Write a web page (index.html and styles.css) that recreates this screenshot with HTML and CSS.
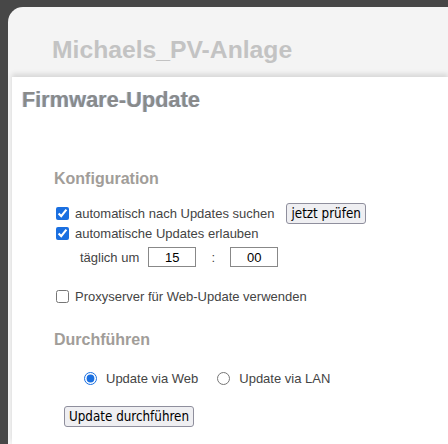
FILE: index.html
```html
<!DOCTYPE html>
<html>
<head>
<meta charset="utf-8">
<link rel="stylesheet" href="styles.css">
</head>
<body>
<div class="frame">
  <div class="header">Michaels_PV-Anlage</div>
  <div class="content">
    <h1 class="page-title">Firmware-Update</h1>
    <h2 class="section-title">Konfiguration</h2>
    <div class="row">
      <label class="check"><input type="checkbox" checked> automatisch nach Updates suchen</label>
      <button class="btn btn-check">jetzt prüfen</button>
    </div>
    <div class="row">
      <label class="check"><input type="checkbox" checked> automatische Updates erlauben</label>
    </div>
    <div class="row time-row">
      <span class="time-label">täglich um</span>
      <input class="time-input" type="text" value="15">
      <span class="colon">:</span>
      <input class="time-input" type="text" value="00">
    </div>
    <div class="row proxy-row">
      <label class="check"><input type="checkbox"> Proxyserver für Web-Update verwenden</label>
    </div>
    <h2 class="section-title exec-title">Durchführen</h2>
    <div class="radio-row">
      <label class="radio"><input type="radio" name="src" checked> Update via Web</label>
      <label class="radio"><input type="radio" name="src"> Update via LAN</label>
    </div>
    <div class="submit-row">
      <button class="btn">Update durchführen</button>
    </div>
  </div>
</div>
</body>
</html>
```

FILE: styles.css
```css
html, body {
  margin: 0;
  padding: 0;
  background: #474747;
  height: 100%;
  overflow: hidden;
}
body {
  padding: 7px 0 0 8px;
  box-sizing: border-box;
  font-family: "Liberation Sans", Arial, sans-serif;
}
.frame {
  background: #f4f4f4;
  border-top-left-radius: 15px;
  height: 100%;
  display: flex;
  flex-direction: column;
}
.header {
  font-size: 24.7px;
  font-weight: bold;
  color: #c3c3c3;
  padding: 30px 0 0 44px;
  height: 40px;
  line-height: 26px;
}
.content {
  background: #fff;
  margin-left: 4px;
  flex: 1;
  box-shadow: 0 -3px 5px rgba(0,0,0,0.12);
  padding: 12px 0 0 10px;
}
.page-title {
  margin: 0;
  font-size: 21.8px;
  font-weight: bold;
  color: #8a8a8a;
  text-shadow: -1px 0 0 rgba(120,170,230,0.5);
  line-height: 22px;
}
.section-title {
  margin: 58px 0 0 32px;
  font-size: 16px;
  font-weight: bold;
  color: #a19d99;
  line-height: 20px;
}
.exec-title {
  margin-top: 26px;
}
.row {
  display: flex;
  align-items: center;
  margin-left: 34px;
  font-size: 13px;
  color: #444;
}
.section-title + .row {
  margin-top: 14px;
}
.check {
  display: flex;
  align-items: center;
}
.check input {
  width: 13px;
  height: 13px;
  margin: 0 6px 0 0;
  accent-color: #1a6fe0;
}
.btn {
  font-family: "DejaVu Sans Condensed", "DejaVu Sans", sans-serif;
  font-size: 13.3px;
  color: #000;
  background: #efeff2;
  border: 1px solid #8f8f9d;
  border-radius: 3px;
  padding: 0 4px;
  height: 21px;
}
.btn-check {
  margin-left: 12px;
}
.row + .row { margin-top: 2px; }
.time-row {
  margin-left: 58px;
  margin-top: 6px !important;
}
.time-label { margin-right: 9px; }
.time-input {
  width: 40px;
  height: 14px;
  border: 1px solid #888;
  border-radius: 0;
  text-align: center;
  font-family: "Liberation Sans", Arial, sans-serif;
  font-size: 13px;
  padding: 2px 3px;
  color: #000;
}
.colon {
  width: 34px;
  text-align: center;
  color: #444;
}
.proxy-row {
  margin-top: 22px !important;
}
.radio-row {
  display: flex;
  margin: 21px 0 0 62px;
  font-size: 13px;
  color: #444;
  gap: 19px;
}
.radio {
  display: flex;
  align-items: center;
}
.radio input {
  width: 13px;
  height: 13px;
  margin: 0 9px 0 0;
  accent-color: #1a6fe0;
}
.submit-row {
  margin: 20px 0 0 42px;
}
```
